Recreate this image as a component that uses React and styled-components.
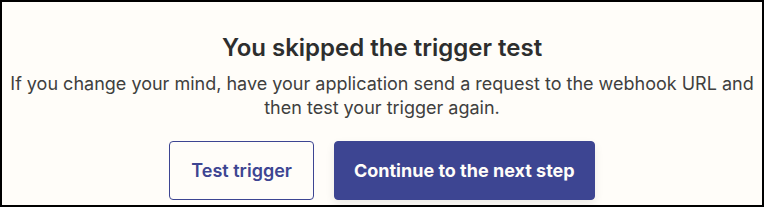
import React from 'react'
import styled, { createGlobalStyle } from 'styled-components'

const GlobalStyle = createGlobalStyle`
  html, body {
    margin: 0;
    padding: 0;
    background: #ffffff;
  }
  body {
    font-family: Inter, "Noto Sans", sans-serif;
  }
`

const Frame = styled.div`
  box-sizing: border-box;
  width: 764px;
  height: 207px;
  border: 2px solid #000;
  background: #fffdf9;
  display: flex;
  flex-direction: column;
  align-items: center;
  padding-top: 31px;
`

const Title = styled.h2`
  margin: 0;
  font-size: 24px;
  line-height: 30px;
  font-weight: 600;
  color: #2d2e2e;
`

const Body = styled.p`
  margin: 9px 0 0;
  font-size: 18px;
  line-height: 24px;
  color: #403f3e;
  text-align: center;
  white-space: nowrap;
`

const Actions = styled.div`
  display: flex;
  gap: 20px;
  margin-top: 21px;
`

const Button = styled.button`
  box-sizing: border-box;
  height: 59px;
  padding: 0 ${p => (p.$primary ? '19px' : '21px')};
  border-radius: 4px;
  font-family: Inter, "Noto Sans", sans-serif;
  font-size: 18px;
  font-weight: ${p => (p.$primary ? 700 : 600)};
  cursor: pointer;
  border: 1px solid #3d4592;
  color: ${p => (p.$primary ? '#fffdf9' : '#3d4592')};
  background: ${p => (p.$primary ? '#3d4592' : 'transparent')};
  box-shadow: ${p => (p.$primary ? '0 4px 10px rgba(0,0,0,0.08)' : 'none')};
`

export default function App() {
  return (
    <>
      <GlobalStyle />
      <Frame>
        <Title>You skipped the trigger test</Title>
        <Body>
          If you change your mind, have your application send a request to the webhook URL and
          <br />
          then test your trigger again.
        </Body>
        <Actions>
          <Button>Test trigger</Button>
          <Button $primary>Continue to the next step</Button>
        </Actions>
      </Frame>
    </>
  )
}
